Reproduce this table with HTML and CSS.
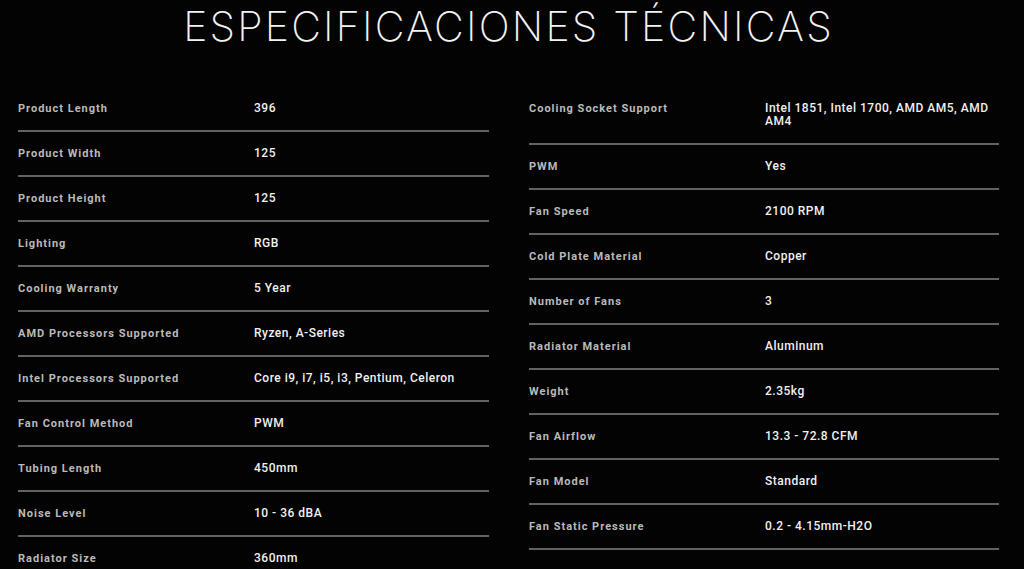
FILE: index.html
```html
<!DOCTYPE html>
<html lang="es">
<head>
<meta charset="utf-8">
<title>Especificaciones técnicas</title>
<link rel="stylesheet" href="styles.css">
</head>
<body>
<section class="specs">
  <h1 class="title">ESPECIFICACIONES TÉCNICAS</h1>
  <div class="columns">
    <div class="col">
      <div class="row"><span class="label">Product Length</span><span class="value">396</span></div>
      <div class="row"><span class="label">Product Width</span><span class="value">125</span></div>
      <div class="row"><span class="label">Product Height</span><span class="value">125</span></div>
      <div class="row"><span class="label">Lighting</span><span class="value">RGB</span></div>
      <div class="row"><span class="label">Cooling Warranty</span><span class="value">5 Year</span></div>
      <div class="row"><span class="label">AMD Processors Supported</span><span class="value">Ryzen, A-Series</span></div>
      <div class="row"><span class="label">Intel Processors Supported</span><span class="value">Core i9, i7, i5, i3, Pentium, Celeron</span></div>
      <div class="row"><span class="label">Fan Control Method</span><span class="value">PWM</span></div>
      <div class="row"><span class="label">Tubing Length</span><span class="value">450mm</span></div>
      <div class="row"><span class="label">Noise Level</span><span class="value">10 - 36 dBA</span></div>
      <div class="row"><span class="label">Radiator Size</span><span class="value">360mm</span></div>
    </div>
    <div class="col">
      <div class="row"><span class="label">Cooling Socket Support</span><span class="value">Intel 1851, Intel 1700, AMD AM5, AMD AM4</span></div>
      <div class="row"><span class="label">PWM</span><span class="value">Yes</span></div>
      <div class="row"><span class="label">Fan Speed</span><span class="value">2100 RPM</span></div>
      <div class="row"><span class="label">Cold Plate Material</span><span class="value">Copper</span></div>
      <div class="row"><span class="label">Number of Fans</span><span class="value">3</span></div>
      <div class="row"><span class="label">Radiator Material</span><span class="value">Aluminum</span></div>
      <div class="row"><span class="label">Weight</span><span class="value">2.35kg</span></div>
      <div class="row"><span class="label">Fan Airflow</span><span class="value">13.3 - 72.8 CFM</span></div>
      <div class="row"><span class="label">Fan Model</span><span class="value">Standard</span></div>
      <div class="row"><span class="label">Fan Static Pressure</span><span class="value">0.2 - 4.15mm-H2O</span></div>
    </div>
  </div>
</section>
</body>
</html>
```
FILE: styles.css
```css
html, body {
  margin: 0;
  padding: 0;
  background: #030303;
  overflow: hidden;
}
body {
  font-family: Roboto, "Liberation Sans", sans-serif;
  color: #eeeeee;
}
.specs {
  padding: 0 25px 0 18px;
}
.title {
  margin: 0;
  padding-top: 4px;
  height: 87px;
  box-sizing: border-box;
  text-align: center;
  font-family: Inter, "Noto Sans", sans-serif;
  font-weight: 200;
  font-size: 41px;
  line-height: 44px;
  letter-spacing: 2.2px;
  color: #f2f2f2;
}
.columns {
  display: grid;
  grid-template-columns: 471px 470px;
  column-gap: 40px;
}
.row {
  display: grid;
  grid-template-columns: 236px 1fr;
  padding: 15px 0;
  border-bottom: 2px solid #626262;
}
.label {
  font-size: 11px;
  line-height: 13px;
  font-weight: 700;
  letter-spacing: 1px;
  color: #bababa;
}
.value {
  font-size: 12px;
  line-height: 13px;
  font-weight: 500;
  letter-spacing: 0.5px;
  color: #f0f0f0;
}
```
